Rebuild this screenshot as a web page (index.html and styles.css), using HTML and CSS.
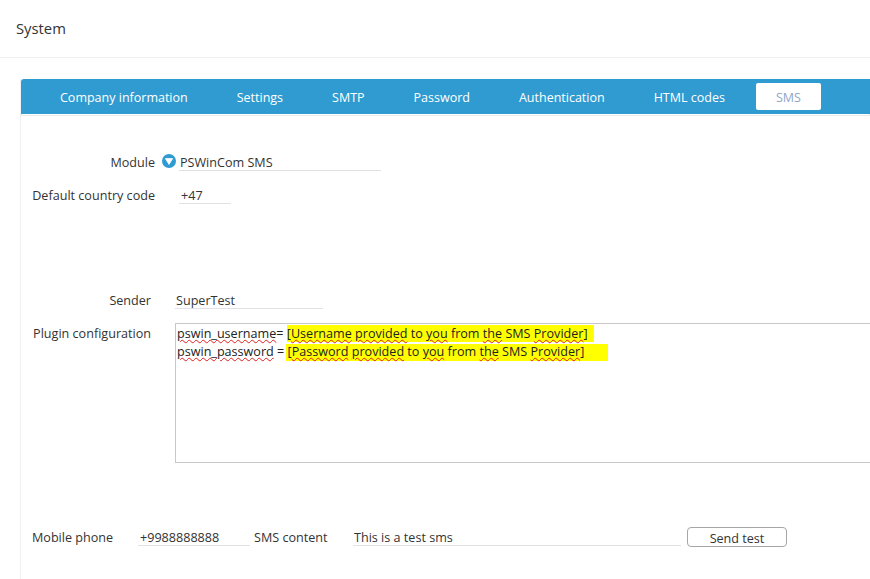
FILE: index.html
```html
<!DOCTYPE html>
<html lang="en">
<head>
<meta charset="utf-8">
<title>System</title>
<link rel="stylesheet" href="styles.css">
</head>
<body>
<header class="page-header">System</header>
<main class="panel">
  <nav class="tabs">
    <a class="tab">Company information</a>
    <a class="tab">Settings</a>
    <a class="tab">SMTP</a>
    <a class="tab">Password</a>
    <a class="tab">Authentication</a>
    <a class="tab">HTML codes</a>
    <a class="tab active">SMS</a>
  </nav>
  <section class="form">
    <div class="row row-module">
      <label class="label label-wide">Module</label>
      <svg class="drop-icon" viewBox="0 0 14 14" width="14" height="14" aria-hidden="true">
        <circle cx="7" cy="7" r="7" fill="#2f9bd0"/>
        <path d="M3.4 4.6h7.2L7 10.4z" fill="#fff" stroke="#fff" stroke-width="0.8" stroke-linejoin="round"/>
      </svg>
      <div class="field field-module">PSWinCom SMS</div>
    </div>
    <div class="row row-country">
      <label class="label label-wide">Default country code</label>
      <div class="field field-country">+47</div>
    </div>
    <div class="row row-sender">
      <label class="label label-narrow">Sender</label>
      <div class="field field-sender">SuperTest</div>
    </div>
    <div class="row row-plugin">
      <label class="label label-narrow label-top">Plugin configuration</label>
      <div class="textarea">
        <div class="line"><span class="sp">pswin_username</span>= <mark class="hl hl-1">[<span class="sp">Username</span> <span class="sp">provided</span> to <span class="sp">you</span> from <span class="sp">the</span> SMS <span class="sp">Provider</span>]</mark></div>
        <div class="line"><span class="sp">pswin_password</span> = <mark class="hl hl-2">[<span class="sp">Password</span> <span class="sp">provided</span> to <span class="sp">you</span> from <span class="sp">the</span> SMS <span class="sp">Provider</span>]</mark></div>
      </div>
    </div>
    <div class="row row-test">
      <label class="label-plain label-mobile">Mobile phone</label>
      <div class="field field-mobile">+9988888888</div>
      <label class="label-plain label-content">SMS content</label>
      <div class="field field-content">This is a test sms</div>
      <button class="button" type="button">Send test</button>
    </div>
  </section>
</main>
</body>
</html>
```
FILE: styles.css
```css
* { box-sizing: border-box; }
html, body { margin: 0; padding: 0; }
body {
  width: 870px;
  height: 579px;
  overflow: hidden;
  background: #fff;
  color: #333;
  font-family: "Open Sans", "Noto Sans", sans-serif;
  font-size: 12.6px;
}
.page-header {
  height: 58px;
  padding: 18px 0 0 16px;
  border-bottom: 1px solid #eeeeee;
  font-size: 14.8px;
  line-height: 20px;
  color: #333;
}
.panel {
  margin: 21px 0 0 20px;
  height: 500px;
  border-left: 1px solid #eef0f4;
}
.tabs {
  display: flex;
  gap: 11px;
  height: 35px;
  padding: 4px 0 4px 20px;
  background: #2f9bd0;
  border-radius: 3px 0 0 0;
  box-shadow: 0 2px 0 -1px #fff, 0 2px 0 #e8e8e8;
}
.tab {
  display: block;
  height: 27px;
  padding: 0 19px;
  line-height: 29px;
  color: #fff;
  font-size: 12.5px;
  white-space: nowrap;
  border-radius: 2px;
}
.tab.active {
  width: 65px;
  margin-left: 1px;
  padding: 0;
  text-align: center;
  background: #fff;
  color: #8fa6c6;
}
.form { padding-left: 11px; }
.row { display: flex; }
.label { flex: none; text-align: right; line-height: 18px; white-space: nowrap; }
.label-wide { width: 123px; }
.label-narrow { width: 119px; }
.label-top { padding-top: 2px; }
.label-plain { flex: none; line-height: 18px; white-space: nowrap; }
.field {
  flex: none;
  height: 17px;
  line-height: 17px;
  border-bottom: 1px solid #e2e2e6;
  white-space: nowrap;
}
.row-module { margin-top: 40px; align-items: flex-start; }
.drop-icon { margin: 0 3px 0 7px; flex: none; }
.field-module { width: 202px; padding-left: 1px; }
.row-country { margin-top: 15px; }
.field-country { width: 52px; margin-left: 24px; padding-left: 2px; }
.row-sender { margin-top: 87px; }
.field-sender { width: 148px; margin-left: 24px; padding-left: 1px; }
.row-plugin { margin-top: 13px; }
.textarea {
  flex: none;
  width: 720px;
  height: 140px;
  margin-left: 24px;
  padding: 1px 0 0 1px;
  border: 1px solid #c8c8c8;
  line-height: 18px;
  color: #222;
}
.line { height: 18px; white-space: pre; }
.hl { color: inherit; display: inline-block; height: 18px; }
.hl-1 {
  width: 307px;
  background: linear-gradient(to bottom, #ffff00 17px, transparent 17px);
}
.hl-2 {
  width: 322px;
  margin-left: -2px;
  padding-left: 2px;
  background: linear-gradient(to bottom, transparent 1px, #ffff00 1px);
}
.sp {
  text-decoration: underline wavy #e02020;
  text-decoration-thickness: 0.7px;
  text-underline-offset: 1px;
}
.row-test { margin-top: 66px; align-items: flex-start; }
.label-mobile { width: 106px; }
.field-mobile { width: 112px; padding-left: 2px; }
.label-content { width: 99px; margin-left: 4px; }
.field-content { width: 328px; padding-left: 1px; }
.button {
  flex: none;
  width: 100px;
  height: 20px;
  margin: -2px 0 0 6px;
  padding: 3px 0 0;
  background: #fff;
  border: 1px solid #a6a6a6;
  border-radius: 4px;
  font: inherit;
  line-height: 16px;
  color: #333;
}
```
